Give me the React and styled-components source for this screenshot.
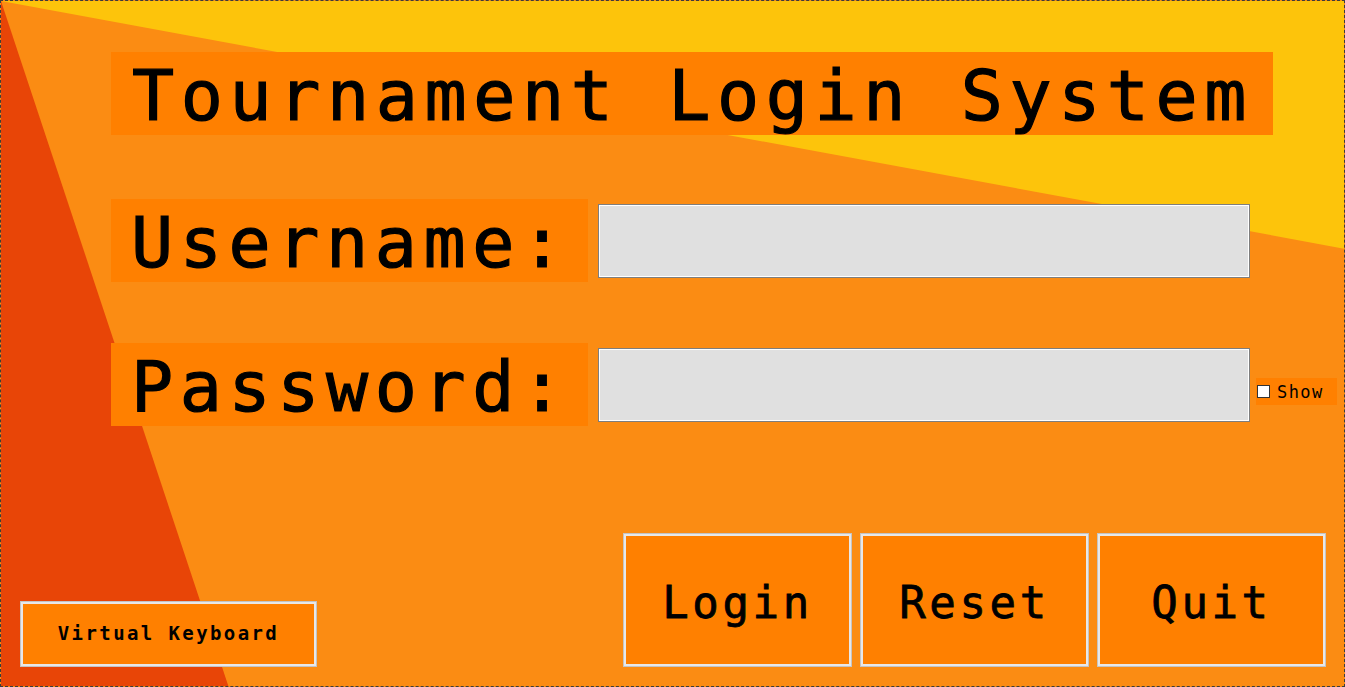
import React, { useState } from "react";
import styled, { createGlobalStyle } from "styled-components";

const GlobalStyle = createGlobalStyle`
  html, body {
    margin: 0;
    padding: 0;
    overflow: hidden;
  }
  * {
    box-sizing: border-box;
  }
`;

const Page = styled.div`
  position: relative;
  width: 1345px;
  height: 687px;
  background: #fb8c13;
  border: 1px dashed #3c3c3c;
  display: flex;
  flex-direction: column;
  font-family: "DejaVu Sans Mono", "Liberation Mono", monospace;
  color: #000;
  overflow: hidden;
`;

const Backdrop = styled.svg`
  position: absolute;
  inset: 0;
  z-index: 0;
`;

const Content = styled.div`
  position: relative;
  z-index: 1;
  flex: 1;
  display: flex;
  flex-direction: column;
  padding: 51px 0 0 110px;
`;

const Title = styled.h1`
  margin: 0;
  width: 1162px;
  height: 83px;
  padding: 4px 0 0 21px;
  background: #ff8000;
  font-size: 70px;
  font-weight: normal;
  letter-spacing: 6.6px;
  line-height: 80px;
  white-space: nowrap;
  -webkit-text-stroke: 1.2px #000;
`;

const Form = styled.div`
  display: grid;
  grid-template-columns: 477px 652px auto;
  column-gap: 10px;
  row-gap: 61px;
  align-items: center;
  margin-top: 64px;
`;

const Label = styled.label`
  height: 83px;
  padding: 4px 0 0 20px;
  background: #ff8000;
  font-size: 70px;
  letter-spacing: 6.6px;
  line-height: 80px;
  white-space: nowrap;
  -webkit-text-stroke: 1.2px #000;
`;

const Field = styled.input`
  height: 74px;
  width: 652px;
  background: #e0e0e0;
  border: 1px solid #7e7e7e;
  box-shadow: inset 0 0 0 1px #ffffff;
  font-family: inherit;
  font-size: 30px;
  padding: 0 12px;
  outline: none;
`;

const Toggle = styled.label`
  display: flex;
  align-items: center;
  gap: 7px;
  height: 27px;
  width: 81px;
  margin-left: -4px;
  padding-left: 1px;
  margin-top: 14px;
  background: #ff8000;
  font-size: 17px;
  letter-spacing: 1.4px;
  cursor: pointer;

  input {
    appearance: none;
    width: 13px;
    height: 13px;
    margin: 0;
    background: #fff;
    border: 1px solid #333;
  }
  input:checked {
    background: #333;
  }
`;

const Footer = styled.div`
  position: relative;
  z-index: 1;
  display: flex;
  justify-content: space-between;
  align-items: flex-end;
  padding: 0 19px 20px 20px;
`;

const Actions = styled.div`
  display: flex;
  gap: 10px;
`;

const Button = styled.button`
  width: ${(p) => (p.$wide ? "295px" : "227px")};
  height: ${(p) => (p.$wide ? "64px" : "132px")};
  background: #ff8000;
  border: 2px solid #e8e8e8;
  box-shadow: 0 0 0 1px #c4c4c4;
  font-family: "DejaVu Sans Mono", "Liberation Mono", monospace;
  font-size: ${(p) => (p.$wide ? "19px" : "44px")};
  font-weight: ${(p) => (p.$wide ? "bold" : "normal")};
  letter-spacing: ${(p) => (p.$wide ? "2.4px" : "3.6px")};
  -webkit-text-stroke: ${(p) => (p.$wide ? "0" : "0.8px #000")};
  color: #000;
  padding: ${(p) => (p.$wide ? "0 0 2px 0" : "4px 0 0 0")};
  cursor: pointer;
`;

export default function App() {
  const [show, setShow] = useState(false);

  return (
    <>
      <GlobalStyle />
      <Page>
        <Backdrop width="1345" height="687" viewBox="0 0 1345 687">
          <polygon points="0,0 1345,0 1345,248" fill="#fdc40b" />
          <polygon points="0,0 228,687 0,687" fill="#e84507" />
        </Backdrop>
        <Content>
          <Title>Tournament Login System</Title>
          <Form>
            <Label htmlFor="user">Username:</Label>
            <Field id="user" type="text" />
            <span />
            <Label htmlFor="pass">Password:</Label>
            <Field id="pass" type={show ? "text" : "password"} />
            <Toggle>
              <input
                type="checkbox"
                checked={show}
                onChange={(e) => setShow(e.target.checked)}
              />
              Show
            </Toggle>
          </Form>
        </Content>
        <Footer>
          <Button $wide>Virtual Keyboard</Button>
          <Actions>
            <Button>Login</Button>
            <Button>Reset</Button>
            <Button>Quit</Button>
          </Actions>
        </Footer>
      </Page>
    </>
  );
}
